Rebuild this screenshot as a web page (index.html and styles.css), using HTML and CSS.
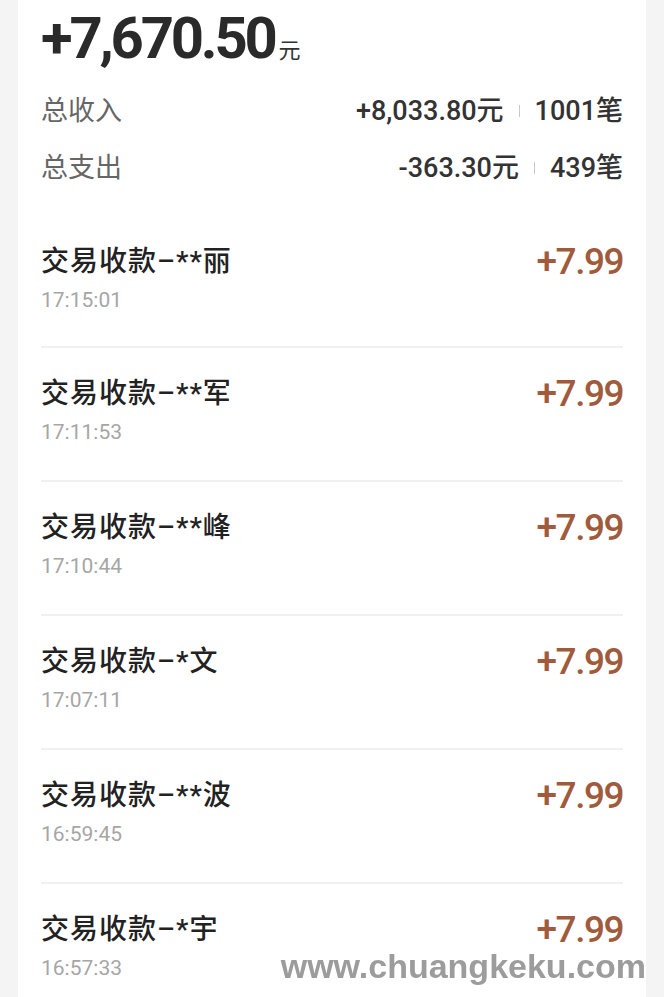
FILE: index.html
```html
<!DOCTYPE html>
<html lang="zh-CN">
<head>
    <meta charset="UTF-8">
    <meta name="viewport" content="width=device-width, initial-scale=1.0">
    <title>账单明细</title>
    <link rel="stylesheet" href="styles.css">
</head>
<body>

    <div id="tarjeta">
        <div class="total">+7,670.50<small>元</small></div>

        <div class="resumen">
            <span class="etiqueta">总收入</span>
            <span class="cifras">+8,033.80元<i class="sep"></i>1001笔</span>
        </div>
        <div class="resumen">
            <span class="etiqueta">总支出</span>
            <span class="cifras">-363.30元<i class="sep"></i>439笔</span>
        </div>

        <ul class="lista">
            <li class="item">
                <div class="info">
                    <p class="titulo">交易收款–**丽</p>
                    <p class="hora">17:15:01</p>
                </div>
                <span class="monto">+7.99</span>
            </li>
            <li class="item">
                <div class="info">
                    <p class="titulo">交易收款–**军</p>
                    <p class="hora">17:11:53</p>
                </div>
                <span class="monto">+7.99</span>
            </li>
            <li class="item">
                <div class="info">
                    <p class="titulo">交易收款–**峰</p>
                    <p class="hora">17:10:44</p>
                </div>
                <span class="monto">+7.99</span>
            </li>
            <li class="item">
                <div class="info">
                    <p class="titulo">交易收款–*文</p>
                    <p class="hora">17:07:11</p>
                </div>
                <span class="monto">+7.99</span>
            </li>
            <li class="item">
                <div class="info">
                    <p class="titulo">交易收款–**波</p>
                    <p class="hora">16:59:45</p>
                </div>
                <span class="monto">+7.99</span>
            </li>
            <li class="item">
                <div class="info">
                    <p class="titulo">交易收款–*宇</p>
                    <p class="hora">16:57:33</p>
                </div>
                <span class="monto">+7.99</span>
            </li>
        </ul>
    </div>

    <div class="marca">www.chuangkeku.com</div>

</body>
</html>
```

FILE: styles.css
```css
@charset "utf-8";

*{    box-sizing: border-box;    margin: 0px;    padding: 0px;}
body{
    background: #f4f4f4;
    font-family: Roboto, "Noto Sans CJK SC", sans-serif;
    color: #333;
    overflow: hidden;
}

#tarjeta{
    margin: 0 18px;
    padding: 0 23px;
    background: #fff;
    min-height: 997px;
}

.total{
    padding-top: 6px;
    height: 80px;
    font-size: 58px;
    line-height: 64px;
    font-weight: 700;
    letter-spacing: -3.2px;
    color: #2a2a2a;
}

.total small{
    margin-left: 4px;
    font-size: 22px;
    font-weight: 400;
    letter-spacing: 0;
    color: #333;
}

.resumen{
    display: flex;
    justify-content: space-between;
    align-items: center;
    height: 57px;
}

.etiqueta{
    font-size: 27px;
    color: #666;
}

.cifras{
    display: flex;
    align-items: center;
    font-size: 27px;
    font-weight: 500;
    color: #333;
}

.sep{
    display: inline-block;
    width: 1px;
    height: 12px;
    margin: 4px 15px 0;
    background: #c8c8c8;
}

.lista{
    list-style: none;
    margin-top: 22px;
}

.item{
    display: flex;
    justify-content: space-between;
    align-items: flex-start;
    padding: 28px 0 33px;
    border-bottom: 2px solid #f0f0f0;
}

.item:first-child{
    padding-bottom: 31px;
}

.titulo{
    font-size: 28px;
    line-height: 36px;
    font-weight: 500;
    letter-spacing: 1px;
    color: #222;
}

.hora{
    margin-top: 5px;
    font-size: 21px;
    line-height: 30px;
    color: #a6a6a6;
}

.monto{
    font-size: 37px;
    line-height: 36px;
    font-weight: 500;
    letter-spacing: -1.5px;
    color: #a05b3c;
}

.marca{
    position: fixed;
    right: 18px;
    top: 947px;
    font-family: "Liberation Sans", sans-serif;
    font-size: 34px;
    font-weight: 700;
    color: #9c9c9c;
}
```
